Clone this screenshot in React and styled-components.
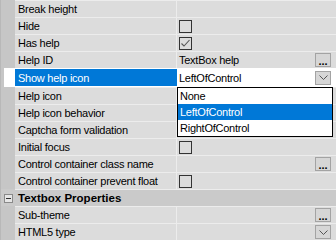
import React from 'react';
import styled, { createGlobalStyle } from 'styled-components';

const GlobalStyle = createGlobalStyle`
  body {
    margin: 0;
    background: #dcdcdc;
    font-family: "Liberation Sans", Arial, sans-serif;
  }
`;

const Grid = styled.div`
  position: relative;
  width: 336px;
  height: 240px;
  overflow: hidden;
  background: #dcdcdc;
  display: flex;
  flex-direction: column;
  font-size: 11px;
  letter-spacing: -0.25px;
  color: #000;
`;

const Row = styled.div`
  display: flex;
  flex-shrink: 0;
  height: ${(p) => (p.$selected ? 19 : 17)}px;
  background: ${(p) => (p.$selected ? '#fff' : p.$category ? '#cacaca' : '#dcdcdc')};
`;

const Gutter = styled.div`
  width: 15px;
  flex-shrink: 0;
  box-sizing: border-box;
  display: flex;
  align-items: center;
  padding-left: 3px;
  background: ${(p) => (p.$selected ? '#fff' : p.$category ? '#cacaca' : '#c6c6c6')};
  box-shadow: ${(p) => (p.$selected ? 'inset 3px 0 0 #c6c6c6' : 'none')};
  border-left: 1px solid #b8b8b8;
`;

const Label = styled.div`
  width: 162px;
  flex-shrink: 0;
  box-sizing: border-box;
  padding-left: 3px;
  display: flex;
  align-items: center;
  white-space: nowrap;
  overflow: hidden;
  border-top: ${(p) => (p.$selected ? 'none' : '1px solid #ececec')};
  border-right: 1px solid ${(p) => (p.$selected ? '#0078d7' : '#ececec')};
  margin: ${(p) => (p.$selected ? '1px 0' : '0')};
  background: ${(p) => (p.$selected ? '#0078d7' : 'transparent')};
  color: ${(p) => (p.$selected ? '#fff' : '#000')};
`;

const Value = styled.div`
  flex: 1;
  box-sizing: border-box;
  display: flex;
  align-items: center;
  justify-content: space-between;
  padding: 0 5px 0 2px;
  white-space: nowrap;
  border-top: ${(p) => (p.$selected ? 'none' : '1px solid #ececec')};
`;

const CategoryTitle = styled.div`
  flex: 1;
  box-sizing: border-box;
  padding-left: 3px;
  display: flex;
  align-items: center;
  border-top: 1px solid #ececec;
  font-weight: bold;
  font-size: 11.5px;
  letter-spacing: 0;
`;

const Expander = styled.div`
  width: 9px;
  height: 9px;
  box-sizing: border-box;
  border: 1px solid #8a8a8a;
  background: #e6e6e6;
  display: flex;
  align-items: center;
  justify-content: center;
  margin-top: 1px;

  &::after {
    content: '';
    width: 5px;
    height: 1px;
    background: #333;
  }
`;

const CheckBox = styled.div`
  width: 13px;
  height: 13px;
  box-sizing: border-box;
  border: 1px solid #333;
  margin-top: 1px;
  display: flex;
  align-items: center;
  justify-content: center;
`;

const SmallButton = styled.div`
  width: 16px;
  height: 14px;
  box-sizing: border-box;
  border: 1px solid #a3a3a3;
  background: #d6d6d6;
  display: flex;
  align-items: ${(p) => (p.$dots ? 'flex-end' : 'center')};
  justify-content: center;
  margin-left: auto;
  font-weight: bold;
  font-size: 11px;
  line-height: 9px;
  letter-spacing: 0;
`;

const DropList = styled.div`
  position: absolute;
  left: 177px;
  top: 87px;
  width: 156px;
  box-sizing: border-box;
  border: 1px solid #000;
  background: #fff;
  display: flex;
  flex-direction: column;
`;

const DropItem = styled.div`
  height: 16px;
  padding-left: 2px;
  display: flex;
  align-items: center;
  background: ${(p) => (p.$active ? '#0078d7' : '#fff')};
  color: ${(p) => (p.$active ? '#fff' : '#000')};
`;

const Chevron = () => (
  <svg width="9" height="5" viewBox="0 0 9 5">
    <polyline points="0.5,0.5 4.5,4.5 8.5,0.5" fill="none" stroke="#555" strokeWidth="1" />
  </svg>
);

const Check = () => (
  <svg width="11" height="11" viewBox="0 0 11 11">
    <polyline points="1.5,5.5 4,8 9.5,2" fill="none" stroke="#555" strokeWidth="1.1" />
  </svg>
);

const rows = [
  { label: 'Break height' },
  { label: 'Hide', type: 'check' },
  { label: 'Has help', type: 'check', checked: true },
  { label: 'Help ID', value: 'TextBox help', type: 'dots' },
  { label: 'Show help icon', value: 'LeftOfControl', type: 'drop', selected: true },
  { label: 'Help icon' },
  { label: 'Help icon behavior' },
  { label: 'Captcha form validation', type: 'check' },
  { label: 'Initial focus', type: 'check' },
  { label: 'Control container class name', type: 'dots' },
  { label: 'Control container prevent float', type: 'check' },
  { label: 'Textbox Properties', category: true },
  { label: 'Sub-theme', type: 'dots' },
  { label: 'HTML5 type', type: 'drop' },
];

function PropertyRow({ row }) {
  if (row.category) {
    return (
      <Row $category>
        <Gutter $category>
          <Expander />
        </Gutter>
        <CategoryTitle>{row.label}</CategoryTitle>
      </Row>
    );
  }
  return (
    <Row $selected={row.selected}>
      <Gutter $selected={row.selected} />
      <Label $selected={row.selected}>{row.label}</Label>
      <Value $selected={row.selected}>
        {row.type === 'check' && <CheckBox>{row.checked && <Check />}</CheckBox>}
        {row.value && <span>{row.value}</span>}
        {row.type === 'dots' && <SmallButton $dots>...</SmallButton>}
        {row.type === 'drop' && (
          <SmallButton>
            <Chevron />
          </SmallButton>
        )}
      </Value>
    </Row>
  );
}

export default function App() {
  return (
    <>
      <GlobalStyle />
      <Grid>
        {rows.map((row) => (
          <PropertyRow key={row.label} row={row} />
        ))}
        <DropList>
          <DropItem>None</DropItem>
          <DropItem $active>LeftOfControl</DropItem>
          <DropItem>RightOfControl</DropItem>
        </DropList>
      </Grid>
    </>
  );
}
